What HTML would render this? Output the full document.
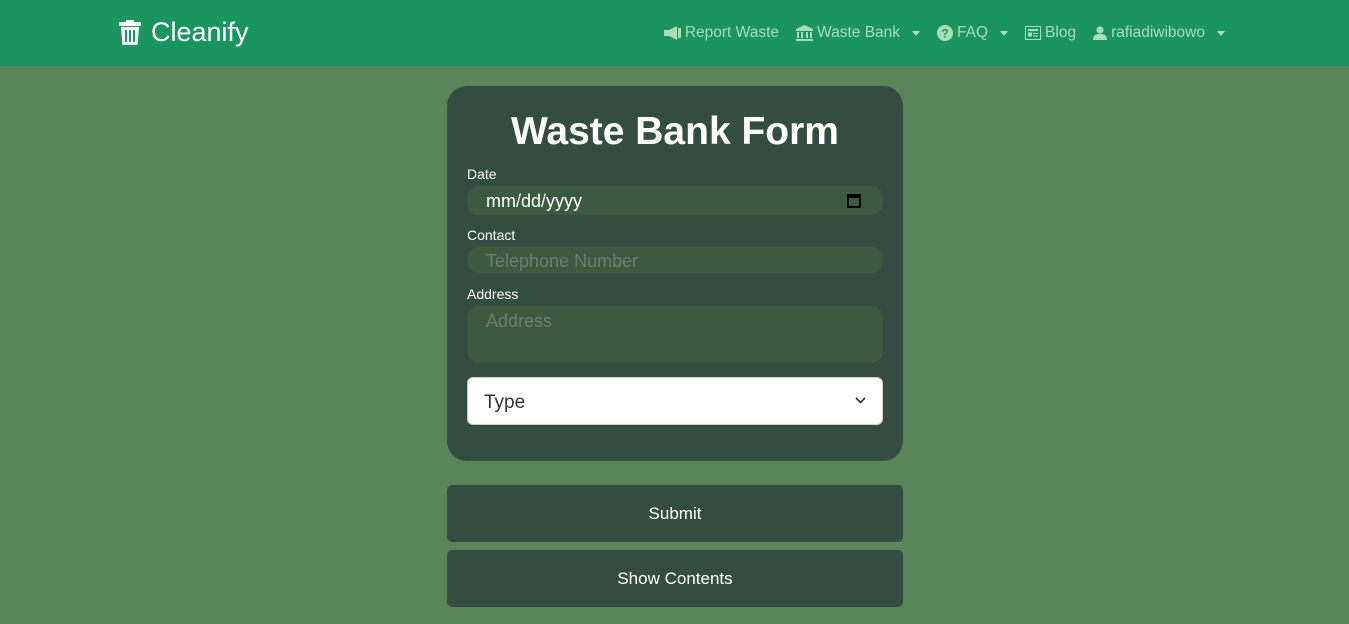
<!DOCTYPE html>
<html><head><style>
*{box-sizing:border-box;margin:0;padding:0}
body{width:1349px;height:624px;background:#5a845a;font-family:"Liberation Sans",sans-serif;position:relative;overflow:hidden}
.nav{position:absolute;left:0;top:0;width:1349px;height:66px;background:#1b955f}
.brand{position:absolute;left:119px;top:17px;color:#fff;font-size:27px;display:flex;align-items:center;gap:10px}
.links{position:absolute;right:124px;top:24px;display:flex;gap:17px;color:#a9dcb8;font-size:15.5px;align-items:center}
.links span{display:flex;align-items:center;gap:4px}
.caret{display:inline-block;width:0;height:0;border-left:4.5px solid transparent;border-right:4.5px solid transparent;border-top:5px solid #a9dcb8;margin-left:8px}
.card{position:absolute;left:447px;top:86px;width:456px;height:375px;background:#344d42;border-radius:20px}
h1{position:absolute;left:0;width:456px;top:24px;text-align:center;color:#fff;font-size:39px;font-weight:bold}
.lbl{position:absolute;left:20px;color:#fff;font-size:14px}
.inp{position:absolute;left:20px;width:416px;background:#3b5a40;border-radius:12px;font-size:18px;padding-left:19px}
.sel{position:absolute;left:20px;top:291px;width:416px;height:48px;background:#fff;border-radius:6px;border:1px solid #ccc;font-size:19px;color:#333;padding:14px 16px}
.btn{position:absolute;left:447px;width:456px;height:57px;background:#344d42;border-radius:5px;color:#fff;font-size:17px;text-align:center;line-height:57px}
</style></head><body>
<div class="nav">
<div class="brand"><svg width="22" height="26" viewBox="0 0 22 26"><rect x="0" y="2" width="22" height="4" rx="1" fill="#fff"/><rect x="7" y="0" width="8" height="3" fill="#fff"/><path d="M2 7h18l-1.5 18h-15z" fill="#fff"/><rect x="6" y="10" width="2" height="12" fill="#1b955f"/><rect x="10" y="10" width="2" height="12" fill="#1b955f"/><rect x="14" y="10" width="2" height="12" fill="#1b955f"/></svg>Cleanify</div>
<div class="links">
<span><svg width="17" height="14"><path d="M0 4h5l8-4v14l-8-4H0z" fill="#a9dcb8"/><rect x="14" y="2" width="3" height="10" fill="#a9dcb8"/></svg>Report Waste</span>
<span><svg width="17" height="16"><path d="M8.5 0L17 4v2H0V4z M1 7h2v6H1z M5 7h2v6H5z M10 7h2v6h-2z M14 7h2v6h-2z M0 14h17v2H0z" fill="#a9dcb8"/></svg>Waste Bank<i class="caret"></i></span>
<span><svg width="16" height="16"><circle cx="8" cy="8" r="8" fill="#a9dcb8"/><text x="8" y="12.5" font-size="12" font-weight="bold" text-anchor="middle" fill="#1b955f" font-family="Liberation Sans">?</text></svg>FAQ<i class="caret"></i></span>
<span><svg width="16" height="14"><rect x="0.5" y="0.5" width="15" height="13" fill="none" stroke="#a9dcb8"/><rect x="3" y="3" width="10" height="2" fill="#a9dcb8"/><rect x="3" y="6.5" width="4" height="4" fill="#a9dcb8"/><rect x="8" y="7" width="5" height="1" fill="#a9dcb8"/><rect x="8" y="9.5" width="5" height="1" fill="#a9dcb8"/></svg>Blog</span>
<span><svg width="14" height="14"><circle cx="7" cy="4" r="3.5" fill="#a9dcb8"/><path d="M0 14c0-5 3-6 7-6s7 1 7 6z" fill="#a9dcb8"/></svg> rafiadiwibowo<i class="caret"></i></span>
</div></div>
<div class="card">
<h1>Waste Bank Form</h1>
<div class="lbl" style="top:80px">Date</div>
<div class="inp" style="top:100px;height:29px;line-height:30px;color:#fff">mm/dd/yyyy<svg style="position:absolute;right:22px;top:7px" width="14" height="15"><rect x="1" y="2" width="12" height="12" fill="none" stroke="#000" stroke-width="2"/><rect x="1" y="2" width="12" height="3" fill="#000"/></svg></div>
<div class="lbl" style="top:141px">Contact</div>
<div class="inp" style="top:161px;height:26px;line-height:29px;color:#6d7d6f">Telephone Number</div>
<div class="lbl" style="top:200px">Address</div>
<div class="inp" style="top:220px;height:57px;padding-top:5px;color:#6d7d6f">Address</div>
<div class="sel">Type<svg style="position:absolute;right:16px;top:19px" width="11" height="7"><path d="M1 1l4.5 4.5L10 1" fill="none" stroke="#333" stroke-width="1.6"/></svg></div>
</div>
<div class="btn" style="top:485px">Submit</div>
<div class="btn" style="top:550px">Show Contents</div>
</body></html>
